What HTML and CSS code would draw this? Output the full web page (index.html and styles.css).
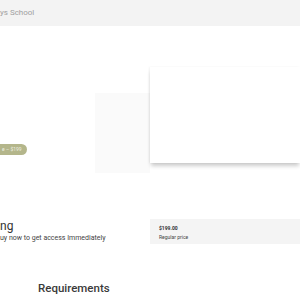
FILE: index.html
```html
<!DOCTYPE html>
<html>
<head>
<meta charset="utf-8">
<link rel="stylesheet" href="styles.css">
</head>
<body>
<header class="topbar"><span class="brand">ys School</span></header>
<section class="hero">
  <div class="hero-left">
    <span class="badge">e – $199</span>
  </div>
  <div class="hero-right">
    <div class="ghost"></div>
    <div class="card"></div>
  </div>
</section>
<section class="info">
  <div class="info-left">
    <h1 class="title">ng</h1>
    <p class="sub">uy now to get access Immediately</p>
  </div>
  <div class="price">
    <div class="amount">$199.00</div>
    <div class="label">Regular price</div>
  </div>
</section>
<section class="req">
  <h2>Requirements</h2>
</section>
</body>
</html>
```
FILE: styles.css
```css
* { box-sizing: border-box; }
html, body { margin: 0; padding: 0; background: #fff; }
body { font-family: Roboto, "Liberation Sans", sans-serif; width: 300px; height: 300px; overflow: hidden; -webkit-font-smoothing: antialiased; }
.topbar { height: 26px; background: #f3f3f3; display: flex; align-items: center; }
.brand { font-size: 8px; color: #a0a0a0; margin-top: -1px; }
.hero { display: grid; grid-template-columns: 150px 150px; height: 176px; }
.hero-left { display: flex; align-items: flex-start; padding-top: 118px; }
.badge { height: 11px; width: 27px; border-radius: 0 6px 6px 0; background: #b4b68b; color: #eef0e2; font-size: 5px; line-height: 11px; padding-left: 2px; white-space: nowrap; overflow: hidden; }
.hero-right { position: relative; padding-top: 41px; }
.ghost { position: absolute; left: -55px; top: 67px; width: 55px; height: 80px; background: #fafafa; }
.card { position: relative; width: 150px; height: 96px; background: #fff; box-shadow: 0 4px 4px -1px rgba(0,0,0,0.2), -1px 0 2px rgba(0,0,0,0.05); }
.info { display: grid; grid-template-columns: 150px 150px; }
.title { margin: 0; font-size: 12px; font-weight: 400; color: #333; line-height: 14px; padding-top: 17px; }
.sub { margin: 1px 0 0; font-size: 7px; color: #444; line-height: 9px; }
.price { margin-top: 17px; height: 25px; background: #f4f4f4; padding: 6px 0 0 9px; }
.amount { font-size: 5px; font-weight: 700; color: #333; line-height: 6px; }
.label { font-size: 5px; color: #444; line-height: 6px; margin-top: 3px; }
.req { padding: 37px 0 0 38px; }
.req h2 { margin: 0; font-size: 11.5px; font-weight: 500; color: #3a3a3a; line-height: 14px; }
```
